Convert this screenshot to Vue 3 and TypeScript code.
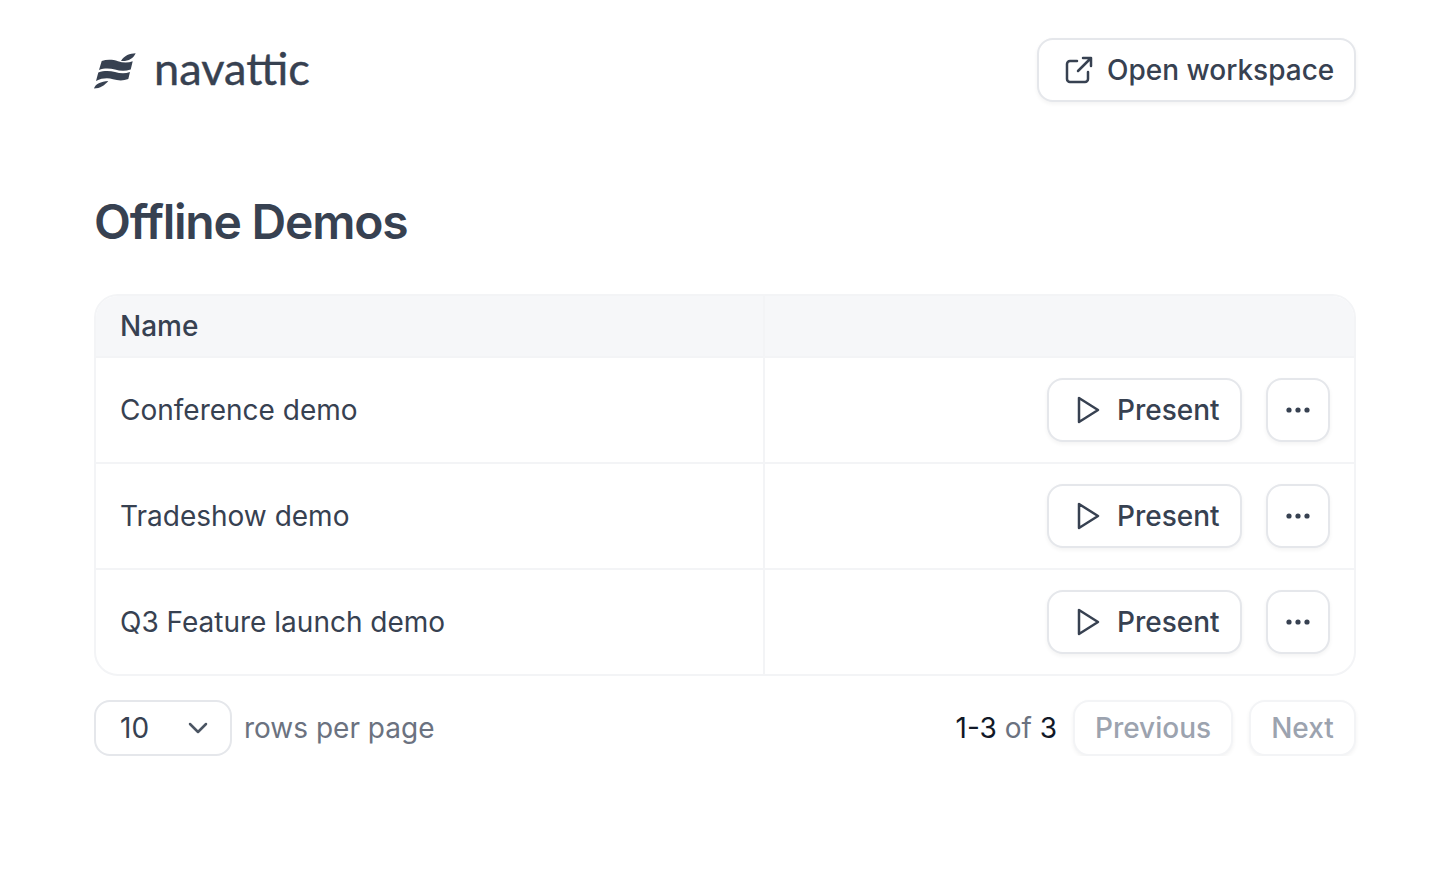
<template>
  <div class="page">
    <header class="topbar">
      <div class="brand">
        <svg class="brand-mark" width="42" height="38" viewBox="0 0 42 38" fill="#374151">
          <path d="M41.7 1.3C36 1.5 30 3.5 27 9C34 9.5 39 7 41.7 1.3Z" />
          <path d="M7.7 9C13 7.2 19 7.6 24 9.2C29 10.8 34 11 38.7 9.2L36.7 17.6C31 19.4 26 19 21 17.6C16 16.2 10 16 5 18Z" />
          <path d="M4.3 20.4C10 18.4 16 18.6 21 20C26 21.4 31 21.8 36 20L34.3 27C29 29 24 28.6 19 27.2C14 25.8 8 26 2 29Z" />
          <path d="M0 36.5C1 32 7 29.5 14.3 29C11 33 6 36.5 0 36.5Z" />
        </svg>
        <span class="brand-name">navattic</span>
      </div>
      <button class="btn btn-open" type="button">
        <svg width="28" height="28" viewBox="0 0 28 28" fill="none" stroke="#374151" stroke-width="2.5" stroke-linecap="round" stroke-linejoin="round">
          <path d="M12 5H5A3 3 0 0 0 2 8V23A3 3 0 0 0 5 26H20A3 3 0 0 0 23 23V16" />
          <path d="M13 15L26 2M18 2H26V10" />
        </svg>
        Open workspace
      </button>
    </header>

    <h1 class="title">Offline Demos</h1>

    <div class="table">
      <div class="row row-head">
        <div class="cell cell-name">Name</div>
        <div class="cell"></div>
      </div>
      <div v-for="demo in demos" :key="demo" class="row">
        <div class="cell cell-name">{{ demo }}</div>
        <div class="cell cell-actions">
          <button class="btn btn-present" type="button">
            <svg width="26" height="30" viewBox="0 0 26 30" fill="none" stroke="#374151" stroke-width="2.5" stroke-linejoin="round">
              <path d="M4 3V27L23 15Z" />
            </svg>
            Present
          </button>
          <button class="btn btn-more" type="button" aria-label="More">
            <svg width="26" height="6" viewBox="0 0 26 6" fill="#374151">
              <circle cx="4" cy="3" r="2.6" />
              <circle cx="13" cy="3" r="2.6" />
              <circle cx="22" cy="3" r="2.6" />
            </svg>
          </button>
        </div>
      </div>
    </div>

    <footer class="pager">
      <div class="pager-left">
        <div class="select">
          <span>10</span>
          <svg width="20" height="12" viewBox="0 0 20 12" fill="none" stroke="#4b5563" stroke-width="2.5" stroke-linecap="round" stroke-linejoin="round">
            <path d="M2 2L10 10L18 2" />
          </svg>
        </div>
        <span class="muted">rows per page</span>
      </div>
      <div class="pager-right">
        <span class="count">1-3 <span class="muted">of</span> 3</span>
        <button class="btn btn-page btn-prev" type="button" disabled>Previous</button>
        <button class="btn btn-page btn-next" type="button" disabled>Next</button>
      </div>
    </footer>
  </div>
</template>

<script setup lang="ts">
const demos: string[] = ['Conference demo', 'Tradeshow demo', 'Q3 Feature launch demo']
</script>

<style>
html,
body {
  background: #fff;
}
</style>

<style scoped>
.page {
  box-sizing: border-box;
  width: 1432px;
  padding: 38px 76px 0 94px;
  font-family: Inter, "Liberation Sans", sans-serif;
  font-size: 28px;
  color: #374151;
}

.topbar {
  display: flex;
  align-items: center;
  justify-content: space-between;
}

.brand {
  display: flex;
  align-items: center;
  gap: 18px;
}

.brand-mark {
  margin-top: 2px;
}

.brand-name {
  margin-top: -4px;
  font-family: Lato, sans-serif;
  font-size: 45.2px;
  line-height: 60px;
  color: #374151;
  -webkit-text-stroke: 0.4px #374151;
}

.btn {
  display: inline-flex;
  align-items: center;
  box-sizing: border-box;
  background: #fff;
  border: 2px solid #e5e7eb;
  border-radius: 16px;
  box-shadow: 0 2px 4px rgba(0, 0, 0, 0.05);
  font-family: inherit;
  font-size: 28px;
  font-weight: 500;
  color: #374151;
  padding: 0;
}

.btn-open {
  width: 319px;
  height: 64px;
  padding-left: 26px;
  gap: 14px;
}

.title {
  margin: 90px 0 0;
  font-size: 48px;
  line-height: 60px;
  font-weight: 600;
  letter-spacing: -1.2px;
  color: #374151;
}

.table {
  margin-top: 42px;
  border: 2px solid #f3f4f6;
  border-radius: 24px;
  overflow: hidden;
}

.row {
  display: grid;
  grid-template-columns: 667px 1fr;
  height: 106px;
  border-top: 2px solid #f3f4f6;
  box-sizing: border-box;
}

.row-head {
  height: 60px;
  border-top: 0;
  background: #f6f7f9;
  font-weight: 500;
}

.cell {
  display: flex;
  align-items: center;
  min-width: 0;
}

.cell + .cell {
  border-left: 2px solid #f3f4f6;
}

.cell-name {
  padding-left: 24px;
}

.cell-actions {
  justify-content: flex-end;
  gap: 24px;
  padding-right: 24px;
}

.btn-present {
  width: 195px;
  height: 64px;
  padding-left: 26px;
  gap: 16px;
}

.btn-more {
  justify-content: center;
  width: 64px;
  height: 64px;
}

.pager {
  display: flex;
  align-items: center;
  justify-content: space-between;
  margin-top: 24px;
}

.pager-left,
.pager-right {
  display: flex;
  align-items: center;
}

.pager-left {
  gap: 12px;
}

.pager-right {
  gap: 16px;
}

.select {
  display: flex;
  align-items: center;
  justify-content: space-between;
  box-sizing: border-box;
  width: 138px;
  height: 56px;
  padding: 0 22px 0 24px;
  border: 2px solid #e5e7eb;
  border-radius: 16px;
  background: #fff;
}

.muted {
  color: #6b7280;
}

.count {
  color: #111827;
}

.btn-page {
  justify-content: center;
  height: 56px;
  border-color: #f3f4f6;
  color: #9ca3af;
}

.btn-prev {
  width: 160px;
}

.btn-next {
  width: 107px;
}
</style>
